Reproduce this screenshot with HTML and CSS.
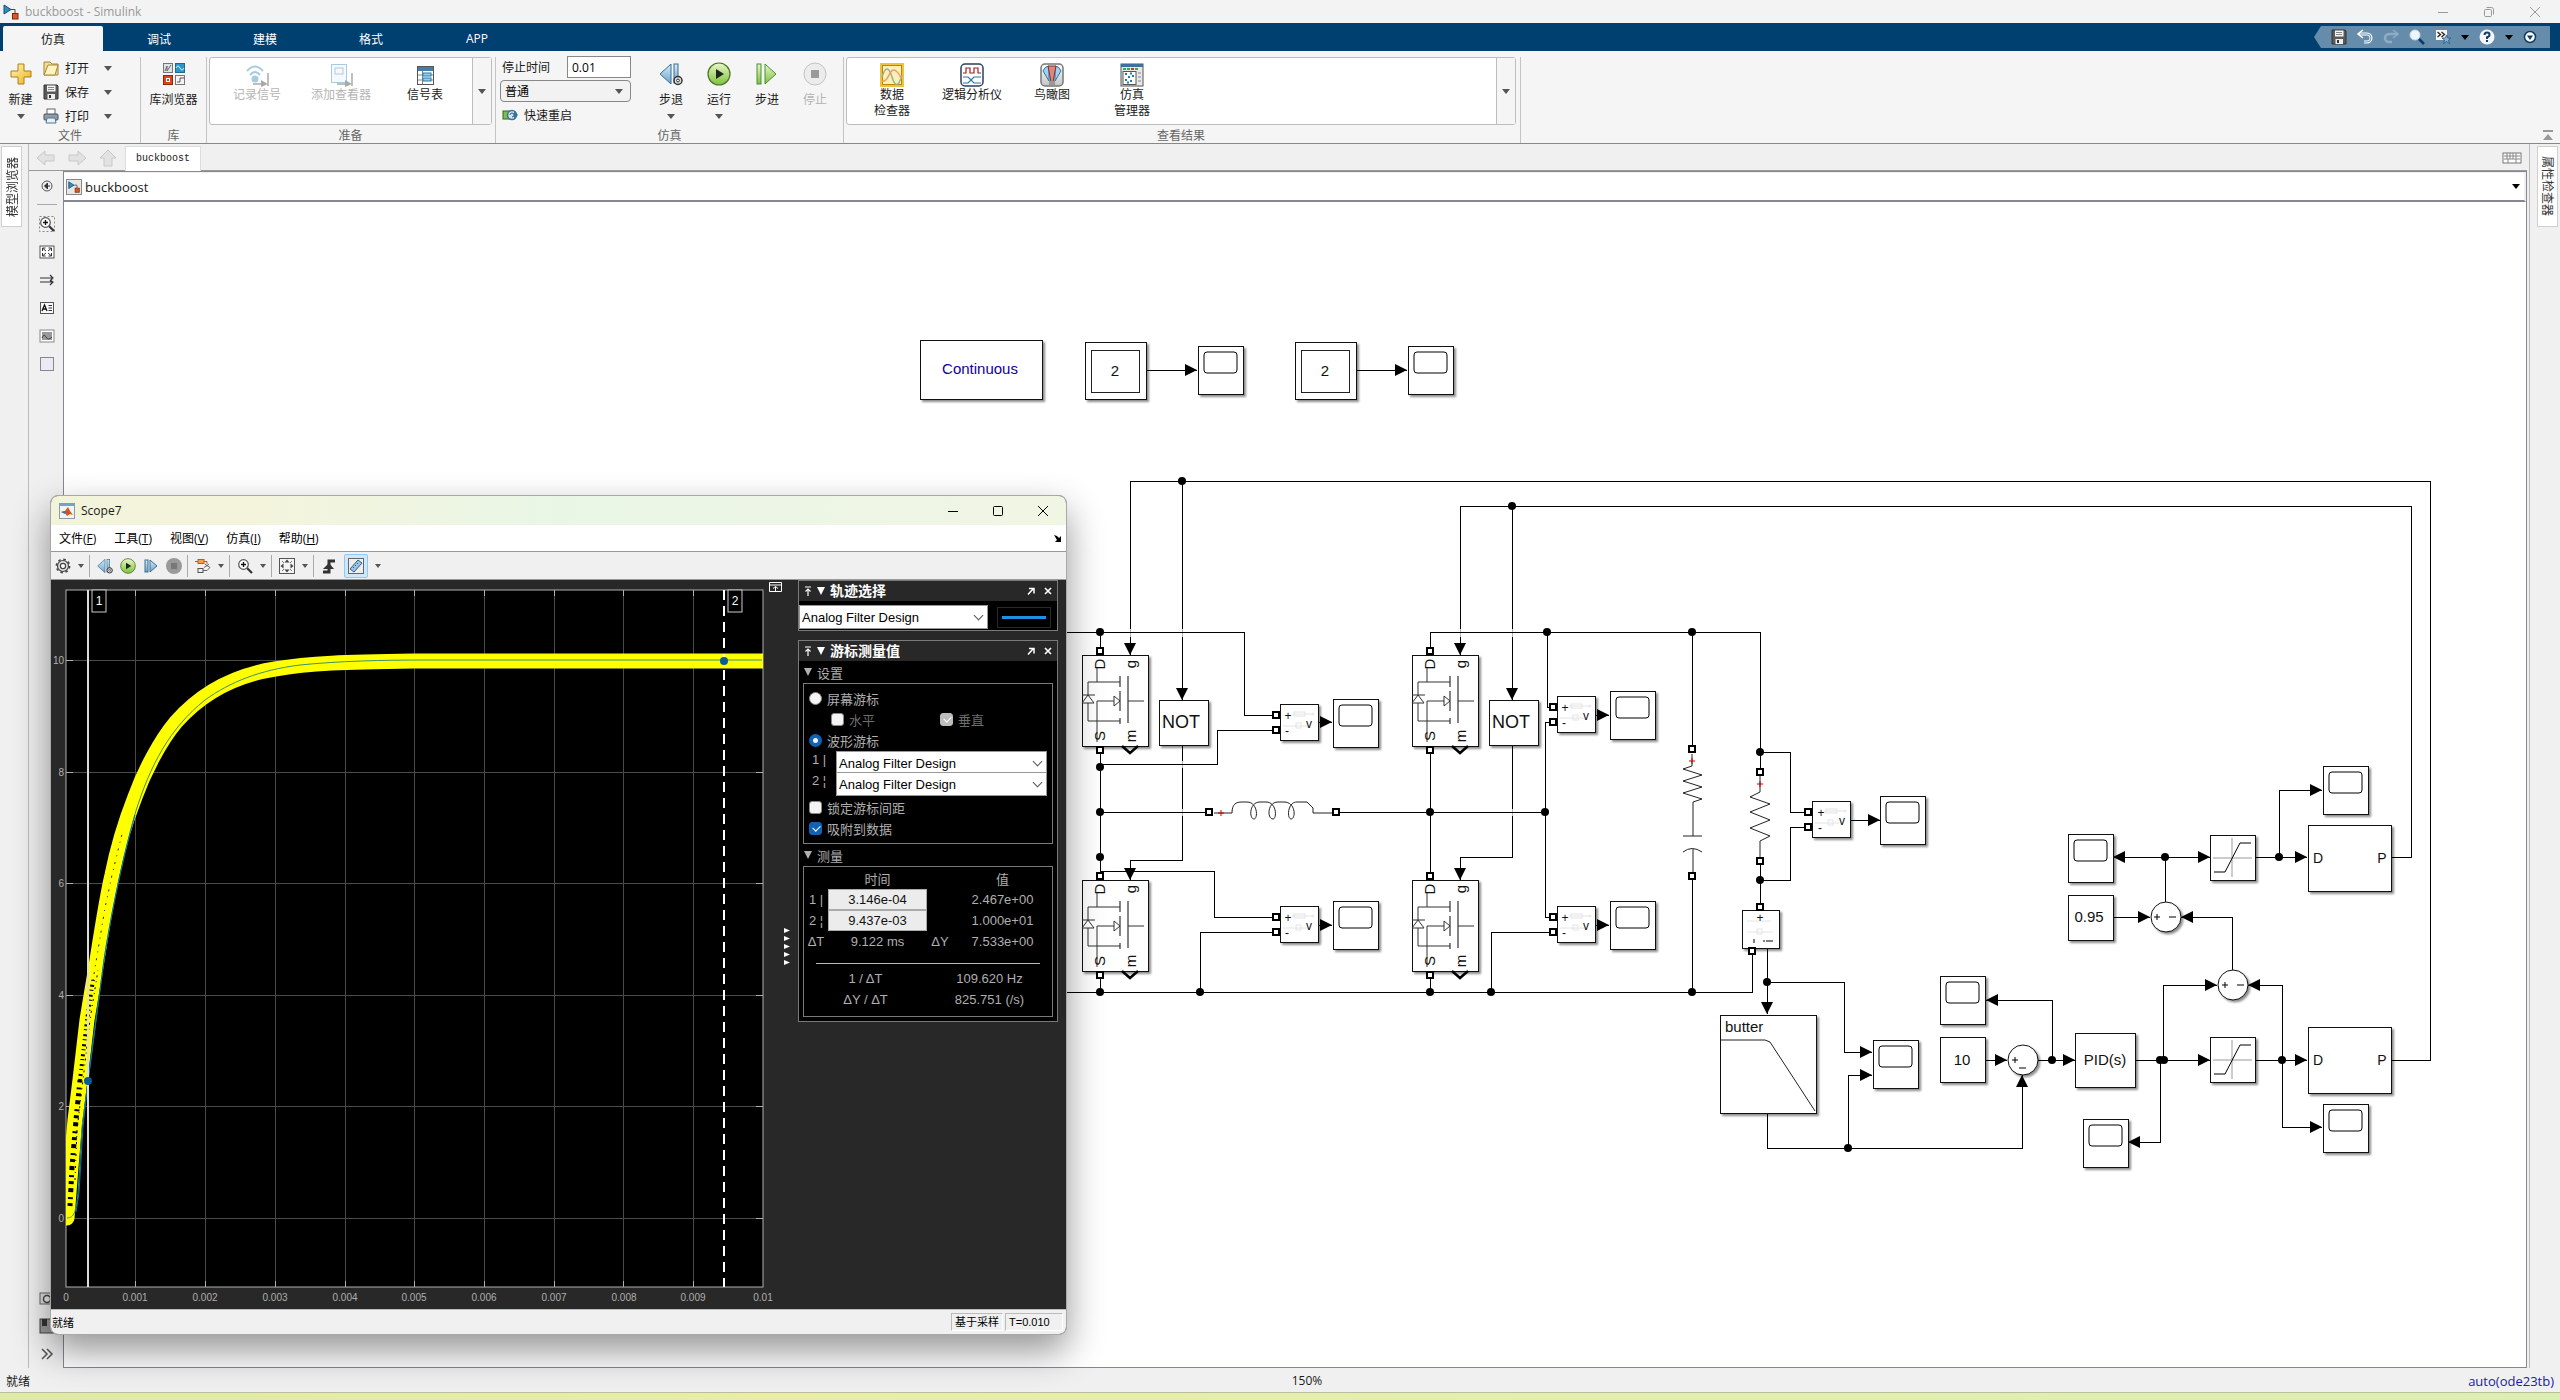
FILE: index.html
```html
<!DOCTYPE html>
<html lang="zh-CN">
  <head>
    <meta charset="utf-8">
    <title>buckboost - Simulink</title>
    <meta name="viewport" content="width=device-width, initial-scale=1.0">
    <link rel="stylesheet" href="styles.css">
  </head>
  <body>
    <!-- shared icons -->
    <svg class="defs" width="0" height="0">
      <defs>
        <linearGradient id="gGold" x1="0" y1="0" x2="1" y2="1"><stop offset="0" stop-color="#fff6c0"/><stop offset="1" stop-color="#eeb010"/></linearGradient>
        <linearGradient id="gGreen" x1="0" y1="0" x2="0" y2="1"><stop offset="0" stop-color="#e9f7c8"/><stop offset="1" stop-color="#7cc23a"/></linearGradient>
        <linearGradient id="gBlue" x1="0" y1="0" x2="0" y2="1"><stop offset="0" stop-color="#d3ebf8"/><stop offset="1" stop-color="#6aa5cc"/></linearGradient>
        <linearGradient id="gGray" x1="0" y1="0" x2="0" y2="1"><stop offset="0" stop-color="#ffffff"/><stop offset="1" stop-color="#c4c4c4"/></linearGradient>
        <symbol id="i-model" viewBox="0 0 16 16">
          <path d="M1 1v9l7-4.500z" fill="#2a8fc4" stroke="#1b4d6b"/>
          <path d="M8 5.500h4v4" fill="none" stroke="#444"/>
          <rect x="9.500" y="9.500" width="5.500" height="5.500" fill="#e0571f" stroke="#7a2a0a"/>
        </symbol>
        <symbol id="i-save" viewBox="0 0 16 16">
          <path d="M1 1h13l1 1v13H1z" fill="#5a5a5a" stroke="#333"/>
          <rect x="4" y="1.500" width="8.500" height="6" fill="#f4f4f4"/>
          <path d="M5 3.500h6M5 5.500h6" stroke="#888"/>
          <rect x="4.500" y="10" width="7.500" height="5" fill="#eee"/>
          <rect x="6" y="11" width="2" height="3" fill="#333"/>
        </symbol>
        <symbol id="i-gear" viewBox="0 0 16 16">
          <circle cx="8" cy="8" r="5.500" fill="#ddd" stroke="#444" stroke-width="1.200"/>
          <circle cx="8" cy="8" r="6.600" fill="none" stroke="#444" stroke-width="1.600" stroke-dasharray="2.500 2.700"/>
          <circle cx="8" cy="8" r="2.600" fill="#fff" stroke="#444" stroke-width="1.200"/>
        </symbol>
        <symbol id="i-run" viewBox="0 0 24 24">
          <circle cx="12" cy="12" r="11" fill="url(#gGreen)" stroke="#4d7326" stroke-width="1.200"/>
          <path d="M9 7l8 5-8 5z" fill="#222"/>
        </symbol>
        <symbol id="i-stepback" viewBox="0 0 24 24">
          <path d="M12 2v20L1 12z" fill="url(#gBlue)" stroke="#3a6d93"/>
          <rect x="15" y="2" width="4" height="19" fill="url(#gBlue)" stroke="#3a6d93"/>
          <circle cx="19" cy="18.500" r="4" fill="#ddd" stroke="#333" stroke-width="1.500"/>
          <circle cx="19" cy="18.500" r="1.400" fill="#fff" stroke="#333"/>
        </symbol>
        <symbol id="i-stepfwd" viewBox="0 0 24 24">
          <rect x="2" y="2" width="4" height="20" fill="url(#gGreen)" stroke="#4b8f3a"/>
          <path d="M10 2v20l11-10z" fill="url(#gGreen)" stroke="#4b8f3a"/>
        </symbol>
        <symbol id="i-stop" viewBox="0 0 24 24">
          <circle cx="12" cy="12" r="11" fill="#ececec" stroke="#c2c2c2"/>
          <rect x="8" y="8" width="8" height="8" fill="#9a9a9a"/>
        </symbol>
        <symbol id="i-lens" viewBox="0 0 16 16">
          <circle cx="6.500" cy="6.500" r="4.800" fill="#fff" stroke="#555" stroke-width="1.200"/>
          <path d="M4 6.500h5M6.500 4v5" stroke="#111" stroke-width="1.300"/>
          <path d="M10.200 10.200L15 15" stroke="#333" stroke-width="2.200"/>
        </symbol>
        <symbol id="i-pin" viewBox="0 0 8 10"><path d="M1 1h6M4 10V3M1.500 5.500L4 3l2.500 2.500" fill="none" stroke="#fff" stroke-width="1.200"/></symbol>
        <symbol id="i-undock" viewBox="0 0 8 8"><path d="M1 7.500L6 2M2 1.500h5v5" fill="none" stroke="#fff" stroke-width="1.500"/></symbol>
        <symbol id="i-x" viewBox="0 0 8 8"><path d="M1 1l6 6M7 1L1 7" stroke="#fff" stroke-width="1.600"/></symbol>
      </defs>
    </svg>

    <header class="titlebar">
      <svg width="16" height="16"><use href="#i-model"/></svg>
      <span class="title-text">buckboost - Simulink</span>
      <div class="win-buttons">
        <button aria-label="最小化"><svg width="12" height="12"><path d="M1 6.500h10" stroke="#999"/></svg></button>
        <button aria-label="还原"><svg width="12" height="12" fill="none" stroke="#999"><rect x="1.500" y="3.500" width="7" height="7" rx="1"/><path d="M3.500 1.500h5q2 0 2 2v5"/></svg></button>
        <button aria-label="关闭"><svg width="12" height="12"><path d="M1 1l10 10M11 1L1 11" stroke="#999"/></svg></button>
      </div>
    </header>

    <nav class="tabs">
      <button class="tab active">仿真</button>
      <button class="tab">调试</button>
      <button class="tab">建模</button>
      <button class="tab">格式</button>
      <button class="tab">APP</button>
      <div class="quick">
        <button aria-label="保存"><svg width="16" height="16"><use href="#i-save"/></svg></button>
        <button aria-label="撤销"><svg width="16" height="16" fill="none"><path d="M2 5h8a4 4 0 0 1 0 8H7" stroke="#fff" stroke-width="3"/><path d="M6 1L1 5l5 4" stroke="#fff" stroke-width="1.500"/><path d="M3 5h7a4 4 0 0 1 0 8H7" stroke="#5d93bd"/></svg></button>
        <button aria-label="重做"><svg width="16" height="16" fill="none" opacity=".6"><path d="M14 5H6a4 4 0 0 0 0 8h3" stroke="#a9c4d8" stroke-width="2.500"/><path d="M10 1l5 4-5 4" stroke="#a9c4d8" stroke-width="1.500"/></svg></button>
        <button aria-label="搜索"><svg width="16" height="16"><circle cx="6" cy="6" r="5" fill="#eef5fa" stroke="#c9d9e4"/><path d="M10 10l5 5" stroke="#0c3b66" stroke-width="2.500"/></svg></button>
        <button aria-label="收藏"><svg width="16" height="16"><rect x="1" y="1" width="11" height="10" fill="#f6f6f6"/><path d="M2.500 3l3 2.500-3 2.500M6.500 3l3 2.500-3 2.500" fill="none" stroke="#222" stroke-width="1.300"/><path d="M11.500 6l1.300 3H16l-2.500 2 1 3.500-3-2-3 2 1-3.500L7 9h3.200z" fill="#7fb2dd" stroke="#2c4d6b" stroke-width=".7"/></svg></button>
        <i class="caret dark"></i>
        <button aria-label="帮助"><svg width="16" height="16"><circle cx="8" cy="8" r="7.500" fill="#f4f7fa"/><path d="M5.500 6q0-2.500 2.500-2.500t2.500 2.200Q10.500 7.500 8 8.300V10" fill="none" stroke="#173f63" stroke-width="2"/><rect x="7" y="11" width="2" height="2" fill="#173f63"/></svg></button>
        <i class="caret dark"></i>
        <button aria-label="更多"><svg width="14" height="14"><circle cx="7" cy="7" r="5.500" fill="#fff" stroke="#0c3b66" stroke-width="1.500"/><path d="M4 5.500h6L7 10z" fill="#0c3b66"/></svg></button>
      </div>
    </nav>

    <section class="toolstrip">
      <div class="group g-file">
        <div class="group-body">
          <button class="big">
            <svg width="24" height="24"><path d="M9 2h6v7h7v6h-7v7H9v-7H2V9h7z" fill="url(#gGold)" stroke="#a8801c"/></svg>
            <span>新建</span><i class="caret"></i>
          </button>
          <div class="rows">
            <button class="row"><svg width="16" height="16"><path d="M1 2h6l2 2h6v11H1z" fill="#f3dd90" stroke="#a5873a"/><path d="M5 5h10l-3 10H1z" fill="#fff3c4" stroke="#a5873a"/></svg><span>打开</span><i class="caret"></i></button>
            <button class="row"><svg width="16" height="16"><use href="#i-save"/></svg><span>保存</span><i class="caret"></i></button>
            <button class="row"><svg width="16" height="16"><rect x="4" y="1" width="8" height="6" fill="#fff" stroke="#666"/><rect x="1" y="6" width="14" height="6" rx="1" fill="#8e9dab" stroke="#46525c"/><path d="M4 10h8l1 5H3z" fill="#e7f1f8" stroke="#56748c"/></svg><span>打印</span><i class="caret"></i></button>
          </div>
        </div>
        <div class="group-label">文件</div>
      </div>

      <div class="group g-lib">
        <div class="group-body">
          <button class="big">
            <svg width="24" height="24">
              <rect x="1.500" y="1.500" width="9" height="9" fill="#dfe3e6" stroke="#777"/><path d="M3 9l2-5v5l4-6" fill="none" stroke="#666"/>
              <rect x="13.500" y="1.500" width="9" height="9" fill="#2b96c9" stroke="#1c6a92"/><path d="M14 6q2-4 4 0t4 0" fill="none" stroke="#d5f0fc"/>
              <rect x="1.500" y="13.500" width="9" height="9" fill="#d9481c" stroke="#8b2a0c"/><rect x="4.500" y="16.500" width="3" height="3" fill="none" stroke="#fff"/>
              <rect x="13.500" y="13.500" width="9" height="9" fill="#f4f4f4" stroke="#777"/><path d="M15 20h3v-4h4" fill="none" stroke="#555"/>
            </svg>
            <span>库浏览器</span>
          </button>
        </div>
        <div class="group-label">库</div>
      </div>

      <div class="group g-prep">
        <div class="group-body">
          <div class="gallery">
            <button class="item" disabled><svg width="24" height="24" fill="none"><path d="M2 8q8-9 16 0M5 12q5-6 10 0" stroke="#a9cbe2" stroke-width="2"/><circle cx="10" cy="16" r="3.500" fill="#a9cbe2"/><path d="M8 21h10M23 10v13" stroke="#aaa" stroke-width="1.500"/><path d="M16 17l7 4-7 3z" fill="#aaa"/></svg><span>记录信号</span></button>
            <button class="item" disabled><svg width="24" height="24" fill="none"><rect x="2.500" y="1.500" width="15" height="18" fill="#f6f9fb" stroke="#a9cbe2"/><rect x="6" y="5" width="8" height="6" stroke="#a9cbe2"/><path d="M8 21h10M23 10v13" stroke="#aaa" stroke-width="1.500"/><path d="M16 17l7 4-7 3z" fill="#aaa"/></svg><span>添加查看器</span></button>
            <button class="item"><svg width="24" height="24"><rect x="4.500" y="3.500" width="16" height="18" fill="#fff" stroke="#555"/><rect x="5" y="4" width="15" height="4" fill="#4a7ba6"/><path d="M5 12h15M5 17h15M9.500 8v13" stroke="#888"/><rect x="10" y="10" width="8" height="3" fill="#8ed0f0" stroke="#2c7aa8"/><rect x="10" y="15" width="8" height="3" fill="#8ed0f0" stroke="#2c7aa8"/></svg><span>信号表</span></button>
            <button class="more" aria-label="更多"><i class="caret"></i></button>
          </div>
        </div>
        <div class="group-label">准备</div>
      </div>

      <div class="group g-sim">
        <div class="group-body">
          <div class="sim-form">
            <div class="stop"><label for="stoptime">停止时间</label><input id="stoptime" type="text" value="0.01"></div>
            <div class="mode"><select aria-label="仿真模式"><option>普通</option></select></div>
            <button class="restart"><svg width="16" height="16"><rect x="1" y="4" width="7" height="8" fill="#7fc04c" stroke="#35641a"/><circle cx="10" cy="8" r="4.500" fill="#cfe6f4" stroke="#35749c" stroke-width="1.500"/><path d="M8 8a2 2 0 1 1 2 2" fill="none" stroke="#235a7d"/><path d="M12 4l4 4-4 4z" fill="#35749c"/></svg><span>快速重启</span></button>
          </div>
          <button class="big"><svg width="24" height="24"><use href="#i-stepback"/></svg><span>步退</span><i class="caret"></i></button>
          <button class="big"><svg width="24" height="24"><use href="#i-run"/></svg><span>运行</span><i class="caret"></i></button>
          <button class="big"><svg width="24" height="24"><use href="#i-stepfwd"/></svg><span>步进</span></button>
          <button class="big" disabled><svg width="24" height="24"><use href="#i-stop"/></svg><span>停止</span></button>
        </div>
        <div class="group-label">仿真</div>
      </div>

      <div class="group g-result">
        <div class="group-body">
          <div class="gallery">
            <button class="item"><svg width="24" height="24" fill="none"><rect x="1" y="1" width="22" height="22" fill="#ffeeb5" stroke="#f0c33c" stroke-width="2"/><rect x="2.500" y="2.500" width="19" height="19" stroke="#b8860b"/><path d="M2 14q5-16 10 0t10-2" stroke="#8fb39a" stroke-width="1.500"/><path d="M2 18q4 1 7-6t7-4 5 8" stroke="#e0a070" stroke-width="1.500"/></svg><span>数据<br>检查器</span></button>
            <button class="item"><svg width="24" height="24" fill="none"><rect x="1" y="1" width="22" height="22" rx="4" fill="#fff" stroke="#2c3e60" stroke-width="1.500"/><path d="M3 10h3V5h4v5h4V5h4v5h3" stroke="#a02020" stroke-width="1.200"/><path d="M3 14h5l6 6h7M3 20h5l6-6h7" stroke="#2878a8" stroke-width="1.200"/></svg><span>逻辑分析仪</span></button>
            <button class="item"><svg width="24" height="24"><rect x="1" y="1" width="22" height="22" rx="4" fill="url(#gGray)" stroke="#777" stroke-width="1.500"/><path d="M9 18L3 8q2-5 6-5zM15 18l6-10q-2-5-6-5z" fill="#9fd0ee" stroke="#2878a8"/><path d="M8 3h8l-3 16h-2z" fill="#d98a80" stroke="#8a2a20"/><rect x="9" y="18" width="6" height="4" fill="#999"/></svg><span>鸟瞰图</span></button>
            <button class="item"><svg width="24" height="24"><rect x="1" y="1" width="22" height="22" fill="#e8e8e8" stroke="#555"/><rect x="1" y="1" width="22" height="3" fill="#3f6f9f"/><path d="M3 6h3M7 6h3M15 6h3" stroke="#2fae4e" stroke-width="2"/><path d="M11 6h3" stroke="#c33" stroke-width="2"/><rect x="3" y="8.500" width="13" height="13" fill="#fff" stroke="#555"/><path d="M5 11h2M10 10.500h2M8 14h2M12 13h2M5 17h2M10 18h2M7 19.500h2" stroke="#2878a8" stroke-width="2"/><path d="M18 10h3M18 14h3M18 18h3" stroke="#888"/></svg><span>仿真<br>管理器</span></button>
            <button class="more" aria-label="更多"><i class="caret"></i></button>
          </div>
        </div>
        <div class="group-label">查看结果</div>
      </div>
      <button class="collapse" aria-label="折叠"><svg width="12" height="12"><path d="M1 1h10v2H1zM6 5l5 6H1z" fill="#999"/></svg></button>
    </section>

    <main class="work">
      <aside class="dock left"><button class="side-tab">模型浏览器</button></aside>

      <div class="center">
        <div class="doc-tabs">
          <button aria-label="后退"><svg width="20" height="18"><path d="M1 9l8-7v4h9v6H9v4z" fill="#e2e2e2" stroke="#c8c8c8"/></svg></button>
          <button aria-label="前进"><svg width="20" height="18"><path d="M19 9l-8-7v4H2v6h9v4z" fill="#e2e2e2" stroke="#c8c8c8"/></svg></button>
          <button aria-label="向上"><svg width="20" height="18"><path d="M10 1l8 8h-4v8H6V9H2z" fill="#e2e2e2" stroke="#c8c8c8"/></svg></button>
          <button class="doc-tab">buckboost</button>
          <button class="keys" aria-label="键盘"><svg width="20" height="12"><rect x="1" y="1" width="18" height="10" fill="#fff" stroke="#777"/><path d="M2 4h16M2 7h16M5 1v6M8 1v6M11 1v6M14 1v6M6 7v4M14 7v4" stroke="#888"/></svg></button>
        </div>
        <div class="editor-row">
          <div class="palette">
            <button aria-label="隐藏浏览器"><svg width="16" height="16"><circle cx="8" cy="8" r="5" fill="#eee" stroke="#555"/><path d="M11 8H6M8.500 5L5.500 8l3 3z" fill="#333" stroke="#333"/></svg></button>
            <hr>
            <button aria-label="缩放"><svg width="16" height="16"><rect x=".5" y=".5" width="15" height="15" fill="none" stroke="#888" stroke-dasharray="2 2"/><use href="#i-lens"/></svg></button>
            <button aria-label="适应视图"><svg width="16" height="16"><rect x="1" y="2" width="14" height="12" fill="#fff" stroke="#555"/><path d="M3.500 7V4h3M9.500 4h3v3M12.500 9v3h-3M6.500 12h-3V9M4 4.500l3 2.500M12 4.500L9 7M4 11.500L7 9M12 11.500L9 9" fill="none" stroke="#333"/></svg></button>
            <button aria-label="采样时间"><svg width="16" height="16"><path d="M1 6h12M1 10h12M11 3l3 3-3 3M11 8l3 2-3 3" fill="none" stroke="#333" stroke-width="1.200"/></svg></button>
            <button aria-label="注释"><svg width="16" height="16"><rect x="1.500" y="2.500" width="13" height="11" fill="#f8f8f8" stroke="#555"/><path d="M3 11l2.500-6L8 11M4 9h3" fill="none" stroke="#111" stroke-width="1.300"/><path d="M9.500 5.500H13M9.500 8H13M9.500 10.500H13" stroke="#333"/></svg></button>
            <button aria-label="图像"><svg width="16" height="16"><rect x="1" y="2" width="14" height="12" fill="#fff" stroke="#888"/><rect x="3" y="4" width="10" height="8" fill="#999"/><path d="M3 10q2-5 4-1t6 0" fill="none" stroke="#444"/></svg></button>
            <button aria-label="区域"><svg width="16" height="16"><rect x="1.500" y="1.500" width="13" height="13" fill="#e9e9f7" stroke="#888"/></svg></button>
            <button class="push" aria-label="截图"><svg width="16" height="16"><rect x="1" y="3" width="14" height="11" fill="#ddd" stroke="#666"/><circle cx="8" cy="9" r="3.500" fill="#eee" stroke="#444" stroke-width="1.500"/></svg></button>
            <button aria-label="报告"><svg width="16" height="16"><rect x="1" y="1" width="14" height="14" fill="#999" stroke="#444"/><path d="M3 1h5v7H3z" fill="#333"/></svg></button>
            <button aria-label="展开"><svg width="16" height="16"><path d="M3 3l5 5-5 5M8 3l5 5-5 5" fill="none" stroke="#555" stroke-width="1.500"/></svg></button>
          </div>

          <div class="editor">
            <div class="crumb">
              <svg width="16" height="16"><rect x=".5" y=".5" width="15" height="15" fill="#e6e6e6" stroke="#888"/><use href="#i-model" x="2" y="2" width="12" height="12"/></svg>
              <span>buckboost</span>
              <i class="caret dark"></i>
            </div>
            <div class="canvas">
              <svg class="diagram" width="2462" height="1165" viewBox="64 202 2462 1165">
                <defs>
                  <marker id="arrow" markerUnits="userSpaceOnUse" markerWidth="12" markerHeight="12" refX="12" refY="6" orient="auto"><path d="M0 0l12 6-12 6z"/></marker>
                  <g id="port"><rect x="-3" y="-3" width="6" height="6" fill="#fff" stroke="#000" stroke-width="2"/></g>
                  <g id="scope">
                    <rect class="block" width="45" height="48"/>
                    <rect x="6" y="6" width="33" height="21" rx="3" fill="none" stroke="#000"/>
                  </g>
                  <g id="sat">
                    <rect class="block" width="45" height="45"/>
                    <path d="M3 23h39M22 3v39" stroke="#999"/>
                    <path d="M4 37h11L30 8h11" fill="none" stroke="#000"/>
                  </g>
                  <g id="meter">
                    <rect class="block" width="38" height="36"/>
                    <g fill="none" stroke="#e4e4e4"><path d="M12 10h20M3 22h24"/><rect x="14" y="8" width="11" height="4"/><rect x="16" y="19" width="5" height="5"/><circle cx="33" cy="10" r="1"/></g>
                    <use href="#port" x="-4" y="11"/><use href="#port" x="-4" y="26"/>
                  </g>
                  <g id="mosfet">
                    <rect class="block" width="66" height="91"/>
                    <g fill="none" stroke="#333">
                      <path d="M15 12v15M6 27h32M6 27v13M6 66V48M6 66h32M0 40h13M6 40l-6 8h12zM15 87V46h17M32 41l6 5-6 5zM46 46h16"/>
                      <path d="M38 21v11M38 36v20M38 63v6M46 21v47" stroke-width="1.200"/>
                    </g>
                    <path d="M40 91l8 7 8-7" fill="none" stroke="#000" stroke-width="2.500"/>
                    <use href="#port" x="18" y="-4"/><use href="#port" x="18" y="95"/>
                  </g>
                  <g id="plus"><path d="M-3 0h6M0-3v6" stroke="#c00"/></g>
                </defs>

                <!-- vertical signals first, the buses jump over them -->
                <g class="wire">
                  <path d="M1182 481V700" marker-end="url(#arrow)"/>
                  <path d="M2390 1060H2430V481H1130V655" marker-end="url(#arrow)"/>
                  <path d="M2390 857H2411V506H1460V655" marker-end="url(#arrow)"/>
                  <path d="M1512 506V700" marker-end="url(#arrow)"/>
                  <path d="M1182 745V860H1130V880" marker-end="url(#arrow)"/>
                  <path d="M1512 745V857H1460V880" marker-end="url(#arrow)"/>
                </g>
                <g fill="#fff" fill-opacity=".7">
                  <rect x="1127" y="629" width="6" height="8"/><rect x="1179" y="629" width="6" height="8"/>
                  <rect x="1457" y="629" width="6" height="8"/><rect x="1509" y="629" width="6" height="8"/>
                  <rect x="1179" y="761" width="6" height="7"/><rect x="1179" y="809" width="6" height="7"/><rect x="1509" y="809" width="6" height="7"/>
                </g>
                <g class="wire">
                  <path d="M1060 632H1244V715H1276"/>
                  <path d="M1100 632V651M1100 749V876M1100 974V992"/>
                  <path d="M1100 764H1217V730H1276"/>
                  <path d="M1100 812H1209M1336 812H1545"/>
                  <path d="M1100 871H1214V917H1276"/>
                  <path d="M1060 992H1752V951"/>
                  <path d="M1200 992V932H1276"/>
                  <path d="M1430 651V632H1760V772M1760 861V907M1430 749V876M1430 974V992"/>
                  <path d="M1547 632V707H1554"/>
                  <path d="M1554 722H1545V917H1554M1554 932H1491V992"/>
                  <path d="M1692 632V749M1692 876V992"/>
                  <path d="M1760 752H1790V812H1809M1760 880H1790V827H1809"/>
                  <path d="M1318 722H1332" marker-end="url(#arrow)"/>
                  <path d="M1318 925H1332" marker-end="url(#arrow)"/>
                  <path d="M1596 715H1609" marker-end="url(#arrow)"/>
                  <path d="M1596 925H1609" marker-end="url(#arrow)"/>
                  <path d="M1850 820H1880" marker-end="url(#arrow)"/>
                  <path d="M1767 948V1014" marker-end="url(#arrow)"/>
                  <path d="M1767 982H1844V1052H1872" marker-end="url(#arrow)"/>
                  <path d="M1848 1148V1075H1872" marker-end="url(#arrow)"/>
                  <path d="M1767 1113V1148H2022V1075" marker-end="url(#arrow)"/>
                  <path d="M1985 1060H2007" marker-end="url(#arrow)"/>
                  <path d="M2038 1060H2075" marker-end="url(#arrow)"/>
                  <path d="M2052 1060V1000H1986" marker-end="url(#arrow)"/>
                  <path d="M2135 1060H2210" marker-end="url(#arrow)"/>
                  <path d="M2163 1060V985H2217" marker-end="url(#arrow)"/>
                  <path d="M2160 1060V1142H2128" marker-end="url(#arrow)"/>
                  <path d="M2255 1060H2307" marker-end="url(#arrow)"/>
                  <path d="M2282 1060V985H2248" marker-end="url(#arrow)"/>
                  <path d="M2282 1060V1127H2322" marker-end="url(#arrow)"/>
                  <path d="M2232 970V917H2181" marker-end="url(#arrow)"/>
                  <path d="M2113 917H2150" marker-end="url(#arrow)"/>
                  <path d="M2165 902V857H2210" marker-end="url(#arrow)"/>
                  <path d="M2165 857H2113" marker-end="url(#arrow)"/>
                  <path d="M2255 857H2307" marker-end="url(#arrow)"/>
                  <path d="M2279 857V790H2322" marker-end="url(#arrow)"/>
                  <path d="M1146 370H1197" marker-end="url(#arrow)"/>
                  <path d="M1356 370H1407" marker-end="url(#arrow)"/>
                </g>

                <g class="dots">
                  <circle cx="1182" cy="481" r="4"/><circle cx="1512" cy="506" r="4"/>
                  <circle cx="1100" cy="632" r="4"/><circle cx="1547" cy="632" r="4"/><circle cx="1692" cy="632" r="4"/>
                  <circle cx="1100" cy="767" r="4"/><circle cx="1100" cy="812" r="4"/><circle cx="1100" cy="857" r="4"/>
                  <circle cx="1430" cy="812" r="4"/><circle cx="1545" cy="812" r="4"/>
                  <circle cx="1100" cy="992" r="4"/><circle cx="1200" cy="992" r="4"/><circle cx="1430" cy="992" r="4"/><circle cx="1491" cy="992" r="4"/><circle cx="1692" cy="992" r="4"/>
                  <circle cx="1760" cy="752" r="4"/><circle cx="1760" cy="880" r="4"/><circle cx="1767" cy="982" r="4"/><circle cx="1848" cy="1148" r="4"/>
                  <circle cx="2052" cy="1060" r="4"/><circle cx="2160" cy="1060" r="4"/><circle cx="2164" cy="1060" r="4"/><circle cx="2282" cy="1060" r="4"/>
                  <circle cx="2165" cy="857" r="4"/><circle cx="2279" cy="857" r="4"/>
                </g>

                <!-- top row -->
                <rect class="block" x="920" y="340" width="122" height="59"/>
                <text class="t15 blue" x="980" y="374">Continuous</text>
                <rect class="block" x="1085" y="342" width="61" height="57"/><rect class="inner" x="1091" y="350" width="48" height="42"/>
                <text class="t15" x="1115" y="376">2</text>
                <use href="#scope" x="1198" y="346"/>
                <rect class="block" x="1295" y="342" width="61" height="57"/><rect class="inner" x="1301" y="350" width="48" height="42"/>
                <text class="t15" x="1325" y="376">2</text>
                <use href="#scope" x="1408" y="346"/>

                <!-- bridge -->
                <use href="#mosfet" x="1082" y="655"/><use href="#mosfet" x="1412" y="655"/>
                <use href="#mosfet" x="1082" y="880"/><use href="#mosfet" x="1412" y="880"/>
                <g class="t15">
                  <text transform="translate(1105 664) rotate(-90)">D</text><text transform="translate(1136 664) rotate(-90)">g</text>
                  <text transform="translate(1105 736) rotate(-90)">S</text><text transform="translate(1136 736) rotate(-90)">m</text>
                  <text transform="translate(1435 664) rotate(-90)">D</text><text transform="translate(1466 664) rotate(-90)">g</text>
                  <text transform="translate(1435 736) rotate(-90)">S</text><text transform="translate(1466 736) rotate(-90)">m</text>
                  <text transform="translate(1105 889) rotate(-90)">D</text><text transform="translate(1136 889) rotate(-90)">g</text>
                  <text transform="translate(1105 961) rotate(-90)">S</text><text transform="translate(1136 961) rotate(-90)">m</text>
                  <text transform="translate(1435 889) rotate(-90)">D</text><text transform="translate(1466 889) rotate(-90)">g</text>
                  <text transform="translate(1435 961) rotate(-90)">S</text><text transform="translate(1466 961) rotate(-90)">m</text>
                </g>
                <rect class="block" x="1159" y="700" width="49" height="45"/><text class="t18" x="1181" y="728">NOT</text>
                <rect class="block" x="1489" y="700" width="49" height="45"/><text class="t18" x="1511" y="728">NOT</text>

                <!-- inductor -->
                <use href="#port" x="1209" y="812"/><use href="#port" x="1336" y="812"/>
                <path class="part" d="M1214 813H1232C1232 804 1236 802 1242 802H1247C1258 802 1258 819 1254 819C1249 819 1249 802 1260 802H1266C1277 802 1277 819 1273 819C1267 819 1267 802 1278 802H1284C1296 802 1296 819 1291 819C1287 819 1287 802 1297 802H1307L1313 808V813H1332"/>
                <use href="#plus" x="1221" y="813"/>
                <!-- capacitor branch -->
                <use href="#port" x="1692" y="749"/><use href="#port" x="1692" y="876"/>
                <path class="part" d="M1692 754V766L1683 769L1702 775L1683 781L1702 787L1683 793L1702 799L1693 802V836M1683 836H1702M1683 852Q1692 845 1702 852M1693 849V872"/>
                <use href="#plus" x="1692" y="761"/>
                <!-- load resistor -->
                <use href="#port" x="1760" y="772"/><use href="#port" x="1760" y="861"/>
                <path class="part" d="M1760 776V792L1750 797L1770 804L1750 812L1770 820L1750 828L1770 836L1760 841V857"/>
                <use href="#plus" x="1760" y="784"/>

                <!-- meters and their scopes -->
                <use href="#meter" x="1280" y="704"/><use href="#meter" x="1280" y="906"/>
                <use href="#meter" x="1557" y="696"/><use href="#meter" x="1557" y="906"/>
                <use href="#meter" x="1812" y="801"/>
                <g class="t12">
                  <text x="1288" y="720">+</text><text x="1287" y="735">-</text><text x="1309" y="728">v</text>
                  <text x="1288" y="922">+</text><text x="1287" y="937">-</text><text x="1309" y="930">v</text>
                  <text x="1565" y="712">+</text><text x="1564" y="727">-</text><text x="1586" y="720">v</text>
                  <text x="1565" y="922">+</text><text x="1564" y="937">-</text><text x="1586" y="930">v</text>
                  <text x="1821" y="817">+</text><text x="1820" y="832">-</text><text x="1842" y="825">v</text>
                </g>
                <use href="#scope" x="1333" y="699"/><use href="#scope" x="1333" y="901"/>
                <use href="#scope" x="1610" y="691"/><use href="#scope" x="1610" y="901"/>
                <use href="#scope" x="1880" y="796"/>

                <!-- current sensor -->
                <rect class="block" x="1742" y="910" width="37" height="38"/>
                <g fill="none" stroke="#e4e4e4"><path d="M1747 921h24M1747 932h26"/><rect x="1757" y="929" width="5" height="5"/></g>
                <text class="t12" x="1760" y="922">+</text>
                <path d="M1754 939v4M1763 941h2M1766 941h7" stroke="#000"/>
                <use href="#port" x="1760" y="907"/><use href="#port" x="1752" y="951"/>

                <!-- filter -->
                <rect class="block" x="1720" y="1015" width="96" height="98"/>
                <path class="part" d="M1721 1040H1765L1770 1042L1815 1111"/>
                <text class="t15 start" x="1725" y="1032">butter</text>
                <use href="#scope" x="1873" y="1040"/>

                <!-- controller -->
                <use href="#scope" x="1940" y="976"/>
                <rect class="block" x="1940" y="1037" width="45" height="45"/><text class="t15" x="1962" y="1065">10</text>
                <circle class="block" cx="2023" cy="1060" r="15"/>
                <path class="sign" d="M2012 1060h6M2015 1057v6M2019 1068h7"/>
                <rect class="block" x="2075" y="1033" width="60" height="54"/><text class="t15" x="2105" y="1065">PID(s)</text>
                <use href="#scope" x="2083" y="1119"/>
                <use href="#sat" x="2210" y="1037"/>
                <use href="#sat" x="2210" y="835"/>
                <circle class="block" cx="2233" cy="985" r="15"/>
                <path class="sign" d="M2222 985h6M2225 982v6M2237 985h7"/>
                <circle class="block" cx="2166" cy="917" r="15"/>
                <path class="sign" d="M2154 917h6M2157 914v6M2169 917h7"/>
                <use href="#scope" x="2068" y="834"/>
                <rect class="block" x="2068" y="895" width="45" height="45"/><text class="t15" x="2089" y="922">0.95</text>
                <rect class="block" x="2308" y="825" width="83" height="66"/>
                <rect class="block" x="2308" y="1027" width="83" height="66"/>
                <text class="t14" x="2318" y="863">D</text><text class="t14" x="2382" y="863">P</text>
                <text class="t14" x="2318" y="1065">D</text><text class="t14" x="2382" y="1065">P</text>
                <use href="#scope" x="2323" y="766"/><use href="#scope" x="2323" y="1104"/>
              </svg>
            </div>
          </div>
        </div>
      </div>

      <aside class="dock right"><button class="side-tab">属性检查器</button></aside>
    </main>

    <footer class="status">
      <span>就绪</span><span class="zoom">150%</span><a class="solver" href="#">auto(ode23tb)</a>
    </footer>
    <div class="desktop"></div>

    <!-- floating scope window -->
    <section class="scope-window">
      <header class="sw-title">
        <svg width="16" height="16"><rect x=".5" y=".5" width="15" height="15" fill="#f4f4f4" stroke="#8a9aa8"/><rect x="1" y="1" width="14" height="2" fill="#7aa2c4"/><path d="M2 9l4-1 3-4 2 4 3 4-3-1-3 2-2-3z" fill="#d95319"/><path d="M2 9l4-1 1 2-1 1z" fill="#2f78b5"/></svg>
        <span>Scope7</span>
        <div class="sw-buttons">
          <button aria-label="最小化"><svg width="12" height="12"><path d="M1 6.500h10" stroke="#000"/></svg></button>
          <button aria-label="最大化"><svg width="12" height="12"><rect x="1.500" y="1.500" width="9" height="9" rx="1" fill="none" stroke="#000"/></svg></button>
          <button aria-label="关闭"><svg width="12" height="12"><path d="M1 1l10 10M11 1L1 11" stroke="#000"/></svg></button>
        </div>
      </header>
      <nav class="sw-menu">
        <button>文件(<u>F</u>)</button><button>工具(<u>T</u>)</button><button>视图(<u>V</u>)</button><button>仿真(<u>I</u>)</button><button>帮助(<u>H</u>)</button>
        <svg class="dock-arrow" width="8" height="8"><path d="M0 1l3 1 2 2 2-2v6H1l2-2z"/></svg>
      </nav>
      <div class="sw-toolbar">
        <button aria-label="配置属性"><svg width="16" height="16"><use href="#i-gear"/></svg></button><i class="caret"></i>
        <hr>
        <button aria-label="步退"><svg width="16" height="16"><use href="#i-stepback"/></svg></button>
        <button aria-label="运行"><svg width="16" height="16"><use href="#i-run"/></svg></button>
        <button aria-label="步进"><svg width="16" height="16"><rect x="2" y="2" width="3" height="12" fill="url(#gBlue)" stroke="#3a6d93"/><path d="M7 2v12l7-6z" fill="url(#gBlue)" stroke="#3a6d93"/></svg></button>
        <button aria-label="停止"><svg width="16" height="16"><circle cx="8" cy="8" r="8" fill="#999"/><rect x="5" y="5" width="6" height="6" fill="#777"/></svg></button>
        <hr>
        <button aria-label="信号选择"><svg width="16" height="16" fill="none"><rect x="3" y="1.500" width="6" height="4" fill="#f6a04c" stroke="#c05a10"/><path d="M0 3.500h3M9 3.500h3v3" stroke="#c05a10"/><path d="M10 6l2 2 2-2M8 12.500h4l3-3-3-2-3 2" stroke="#666"/><rect x="3" y="10.500" width="5" height="4" fill="#eee" stroke="#555"/></svg></button><i class="caret"></i>
        <hr>
        <button aria-label="放大"><svg width="16" height="16"><use href="#i-lens"/></svg></button><i class="caret"></i>
        <hr>
        <button aria-label="缩放适应"><svg width="16" height="16"><rect x=".5" y=".5" width="15" height="15" fill="#f4f4f4" stroke="#555"/><path d="M8 1.500l2.500 3h-5zM8 14.500l2.500-3h-5zM1.500 8l3-2.500v5zM14.500 8l-3-2.500v5z" fill="#444"/><path d="M3 3l2 2M13 3l-2 2M3 13l2-2M13 13l-2-2" stroke="#777"/></svg></button><i class="caret"></i>
        <hr>
        <button aria-label="触发"><svg width="16" height="16"><path d="M2 14h6V3h6" fill="none" stroke="#333" stroke-width="3"/><path d="M2 11l6-6 5 6z" fill="#333"/></svg></button>
        <button class="on" aria-label="游标测量"><svg width="16" height="16"><rect x=".5" y=".5" width="15" height="15" fill="#eee" stroke="#666"/><path d="M2 11l8-9 4 3-8 9z" fill="#9cc4e6" stroke="#2c5f8c"/><path d="M5 9l1 1M7 7l1 1M9 5l1 1" stroke="#2c5f8c"/></svg></button><i class="caret"></i>
      </div>

      <div class="sw-body">
        <svg class="plot" width="747" height="729" viewBox="51 580 747 729">
          <defs><clipPath id="axes"><rect x="66" y="590" width="697" height="697"/></clipPath></defs>
          <rect x="66" y="590" width="697" height="697" fill="#000" stroke="#afafaf"/>
          <g class="grid">
            <path d="M135 590V1287M205 590V1287M275 590V1287M345 590V1287M414 590V1287M484 590V1287M554 590V1287M623 590V1287M693 590V1287"/>
            <path d="M66 660H763M66 772H763M66 883H763M66 995H763M66 1106H763M66 1218H763"/>
          </g>
          <g class="tick">
            <path d="M135 590v6M205 590v6M275 590v6M345 590v6M414 590v6M484 590v6M554 590v6M623 590v6M693 590v6"/>
            <path d="M135 1287v-6M205 1287v-6M275 1287v-6M345 1287v-6M414 1287v-6M484 1287v-6M554 1287v-6M623 1287v-6M693 1287v-6"/>
            <path d="M66 660h7M66 772h7M66 883h7M66 995h7M66 1106h7M66 1218h7M763 772h-7M763 883h-7M763 995h-7M763 1106h-7M763 1218h-7"/>
          </g>
          <g clip-path="url(#axes)" fill="none">
            <path d="M67 1218L71 1167L75 1120L80 1080L87 1020L97 960C102 928 107 896 112 875C118 845 126 820 135 797C144 772 160 741 176 722C198 697 230 676 275 669C310 663 345 662 414 661H763" stroke="#ff0" stroke-width="15" stroke-linecap="round"/>
            <path d="M70 1206L72 1167L76 1120L80 1080" stroke="#000" stroke-width="5" stroke-dasharray="3 4 2 5 4 4"/>
            <path d="M80 1080L87 1020L93 980" stroke="#000" stroke-width="4" stroke-dasharray="1 3 2 4"/>
            <path d="M75 1180L77 1130L83 1080L90 1020L98 970" stroke="#000" stroke-dasharray="2 5 1 4"/>
            <path d="M93 980L105 908L112 875L123 830" stroke="#222" stroke-dasharray="1 5 2 6"/>
            <path d="M67 1218C74 1218 76 1212 78 1193L82 1127L88 1081L96 1020L104 960C110 920 122 860 135 814C150 765 170 728 205 700C230 682 260 670 300 665C340 661 380 660 430 660H762" stroke="#3f8f70"/>
            <path d="M76 1212L79 1193L83 1127L88 1081L96 1020L104 960C110 920 122 860 135 815" stroke="#0072bd"/>
          </g>
          <path d="M88 590V1287" stroke="#ddd" stroke-width="2"/>
          <path d="M724 590V1287" stroke="#fff" stroke-width="2" stroke-dasharray="10 6"/>
          <circle cx="88" cy="1081" r="4" fill="#0b5a94"/><circle cx="724" cy="661" r="4" fill="#0b5a94"/>
          <rect x="92" y="590" width="14" height="22" fill="#000" stroke="#ccc"/><rect x="728" y="590" width="14" height="22" fill="#000" stroke="#ccc"/>
          <g class="mark"><text x="99" y="605">1</text><text x="735" y="605">2</text></g>
          <g class="ylab"><text x="64" y="664">10</text><text x="64" y="776">8</text><text x="64" y="887">6</text><text x="64" y="999">4</text><text x="64" y="1110">2</text><text x="64" y="1222">0</text></g>
          <g class="xlab"><text x="66" y="1301">0</text><text x="135" y="1301">0.001</text><text x="205" y="1301">0.002</text><text x="275" y="1301">0.003</text><text x="345" y="1301">0.004</text><text x="414" y="1301">0.005</text><text x="484" y="1301">0.006</text><text x="554" y="1301">0.007</text><text x="624" y="1301">0.008</text><text x="693" y="1301">0.009</text><text x="763" y="1301">0.01</text></g>
          <path d="M769.500 582.500h12v9h-12zM769.500 585h12M775.500 591v-4M773 588.500l2.500-2 2.500 2" fill="none" stroke="#fff"/>
          <path d="M784 928l6 2.500-6 2.500zM784 936l6 2.500-6 2.500zM784 944l6 2.500-6 2.500zM784 952l6 2.500-6 2.500zM784 960l6 2.500-6 2.500z" fill="#fff"/>
        </svg>

        <div class="panels">
          <div class="panel">
            <div class="panel-head"><svg width="8" height="10"><use href="#i-pin"/></svg><i class="tri"></i><h2>轨迹选择</h2><button aria-label="取消停靠"><svg width="8" height="8"><use href="#i-undock"/></svg></button><button aria-label="关闭"><svg width="8" height="8"><use href="#i-x"/></svg></button></div>
            <div class="trace">
              <div class="pick"><select aria-label="轨迹"><option>Analog Filter Design</option></select></div>
              <button class="line-style" aria-label="线型"></button>
            </div>
          </div>

          <div class="panel">
            <div class="panel-head"><svg width="8" height="10"><use href="#i-pin"/></svg><i class="tri"></i><h2>游标测量值</h2><button aria-label="取消停靠"><svg width="8" height="8"><use href="#i-undock"/></svg></button><button aria-label="关闭"><svg width="8" height="8"><use href="#i-x"/></svg></button></div>
            <h3><i class="tri"></i>设置</h3>
            <div class="box settings">
              <label class="opt"><input type="radio" name="cursor"><span>屏幕游标</span></label>
              <div class="pair">
                <label class="opt off"><input type="checkbox" disabled><span>水平</span></label>
                <label class="opt off"><input type="checkbox" checked disabled><span>垂直</span></label>
              </div>
              <label class="opt"><input type="radio" name="cursor" checked><span>波形游标</span></label>
              <div class="source"><label for="src1">1 |</label><div class="pick"><select id="src1"><option>Analog Filter Design</option></select></div></div>
              <div class="source"><label for="src2">2 ¦</label><div class="pick"><select id="src2"><option>Analog Filter Design</option></select></div></div>
              <label class="opt last"><input type="checkbox"><span>锁定游标间距</span></label>
              <label class="opt"><input type="checkbox" checked><span>吸附到数据</span></label>
            </div>
            <h3><i class="tri"></i>测量</h3>
            <div class="box">
              <table>
                <tr><th class="c1"></th><th class="c2">时间</th><th class="c3"></th><th>值</th></tr>
                <tr><td><label for="t1">1 |</label></td><td><input id="t1" type="text" value="3.146e-04"></td><td></td><td>2.467e+00</td></tr>
                <tr><td><label for="t2">2 ¦</label></td><td><input id="t2" type="text" value="9.437e-03"></td><td></td><td>1.000e+01</td></tr>
                <tr><td>ΔT</td><td>9.122 ms</td><td>ΔY</td><td>7.533e+00</td></tr>
                <tr class="rule"><td colspan="4"><hr></td></tr>
                <tr><td colspan="2">1 / ΔT</td><td colspan="2">109.620 Hz</td></tr>
                <tr><td colspan="2">ΔY / ΔT</td><td colspan="2">825.751 (/s)</td></tr>
              </table>
            </div>
          </div>
        </div>
      </div>

      <footer class="sw-status"><span class="ready">就绪</span><span class="cell">基于采样</span><span class="cell wide">T=0.010</span></footer>
    </section>
  </body>
</html>
```
FILE: styles.css
```css
*{
  box-sizing: border-box;
}
body{
  margin: 0;
  height: 100vh;
  display: flex;
  flex-direction: column;
  overflow: hidden;
  background-color: #f0f0f0;
  font-family: "Open Sans", "Noto Sans CJK SC", sans-serif;
  font-size: 12px;
  color: #1a1a1a;
}
button{
  font: inherit;
  color: inherit;
  padding: 0;
  border: none;
  background: none;
  cursor: pointer;
}
svg{
  display: block;
  flex: none;
}
.defs{
  position: absolute;
}
.caret{
  flex: none;
  width: 0;
  height: 0;
  border: 4px solid transparent;
  border-top: 5px solid #555;
  border-bottom: none;
}
.caret.dark{
  border-top-color: #000;
}

/* title bar */
.titlebar{
  flex: none;
  height: 23px;
  display: flex;
  align-items: center;
  padding: 0 14px 0 3px;
  gap: 6px;
  background-color: #f3f3f3;
  color: #999;
}
.win-buttons{
  margin-left: auto;
  display: flex;
  gap: 34px;
  padding-right: 5px;
}

/* ribbon tabs */
.tabs{
  flex: none;
  height: 28px;
  display: flex;
  padding: 3px 10px 0 0;
  background-color: #004071;
}
.tab{
  width: 106px;
  color: #fff;
}
.tab.active{
  width: 100px;
  margin: 0 3px;
  border-radius: 2px 2px 0 0;
  background-color: #f5f5f5;
  color: #1a1a1a;
}
.quick{
  width: 236px;
  height: 22px;
  margin-left: auto;
  padding: 0 13px 0 17px;
  display: flex;
  align-items: center;
  justify-content: space-between;
  background-color: #668cab;
  clip-path: polygon(7px 0, 100% 0, 100% 100%, 7px 100%, 0 50%);
}

/* toolstrip */
.toolstrip{
  flex: none;
  height: 93px;
  display: flex;
  padding-top: 6px;
  border-bottom: 1px solid #888;
  background-color: #f5f5f5;
}
.group{
  display: flex;
  flex-direction: column;
  border-right: 1px solid #c4c4c4;
}
.g-file{
  width: 141px;
}
.g-lib{
  width: 66px;
}
.g-prep{
  width: 289px;
  padding: 0 3px 0 2px;
}
.g-sim{
  width: 348px;
}
.g-result{
  flex: 0 1 677px;
  padding: 0 4px 0 2px;
}
.group-body{
  flex: 1;
  display: flex;
}
.group-label{
  height: 14px;
  line-height: 14px;
  text-align: center;
  color: #666;
}
.big{
  width: 48px;
  padding-top: 5px;
  display: flex;
  flex-direction: column;
  align-items: center;
  line-height: 16px;
  white-space: nowrap;
}
.big span{
  margin: 6px 0;
}
.g-file .big{
  width: 41px;
}
.g-lib .big{
  width: 100%;
}
button:disabled{
  color: #b4b4b4;
}
.rows{
  margin-top: -1px;
}
.row{
  display: flex;
  align-items: center;
  height: 24px;
  gap: 6px;
  padding-left: 2px;
}
.row .caret{
  margin-left: 9px;
}
.gallery{
  flex: 1;
  height: 68px;
  display: flex;
  padding-left: 5px;
  border: 1px solid #bdbdbd;
  border-radius: 3px;
  background-color: #fff;
}
.item{
  width: 84px;
  padding-top: 5px;
  display: flex;
  flex-direction: column;
  align-items: center;
  line-height: 16px;
}
.g-result .item{
  width: 80px;
}
.more{
  width: 19px;
  margin-left: auto;
  display: flex;
  align-items: center;
  justify-content: center;
  border-left: 1px solid #bdbdbd;
  background-color: #f5f5f5;
}
.sim-form{
  width: 131px;
  margin: -1px 16px 0 4px;
  display: flex;
  flex-direction: column;
  gap: 2px;
}
.stop{
  display: flex;
  align-items: center;
  justify-content: space-between;
  padding-left: 2px;
}
.stop input{
  width: 64px;
  height: 22px;
  padding: 0 4px;
  border: 1px solid #888;
  font: inherit;
}
.mode,
.pick{
  position: relative;
}
.mode select{
  width: 100%;
  height: 22px;
  padding: 0 4px;
  appearance: none;
  border: 1px solid #888;
  border-radius: 4px;
  background-color: #f2f2f2;
  font: inherit;
}
.mode::after{
  content: "";
  position: absolute;
  right: 8px;
  top: 9px;
  border: 4px solid transparent;
  border-top: 5px solid #555;
  border-bottom: none;
}
.restart{
  height: 22px;
  display: flex;
  align-items: center;
  gap: 6px;
  padding-left: 2px;
}
.collapse{
  margin: 0 6px 2px auto;
  align-self: flex-end;
}

/* work area */
.work{
  flex: 1;
  min-height: 0;
  display: flex;
}
.dock{
  flex: none;
  padding-top: 2px;
}
.dock.left{
  width: 29px;
  padding-left: 1px;
  border-right: 1px solid #bbb;
}
.dock.right{
  width: 31px;
  padding-left: 7px;
  border-left: 1px solid #bbb;
}
.side-tab{
  width: 21px;
  height: 81px;
  border: 1px solid #d0d0d0;
  background-color: #fff;
  writing-mode: vertical-rl;
  text-orientation: sideways;
  color: #333;
}
.left .side-tab{
  transform: rotate(180deg);
}
.center{
  flex: 1;
  min-width: 0;
  display: flex;
  flex-direction: column;
  padding-right: 2px;
}
.doc-tabs{
  flex: none;
  height: 27px;
  display: flex;
  align-items: center;
  gap: 11px;
  padding: 2px 5px 0 7px;
  border-bottom: 1px solid #999;
}
.doc-tab{
  width: 76px;
  height: 25px;
  margin-left: -4px;
  border: 1px solid #ddd;
  border-bottom: none;
  background-color: #fff;
  font-family: "Liberation Mono", monospace;
  font-size: 10px;
}
.keys{
  margin-left: auto;
}
.editor-row{
  flex: 1;
  min-height: 0;
  display: flex;
}
.palette{
  flex: none;
  width: 34px;
  display: flex;
  flex-direction: column;
  align-items: center;
  padding: 1px 0 0 2px;
}
.palette button{
  height: 28px;
}
.palette hr{
  width: 20px;
  margin: 4px 0 5px;
  border: none;
  border-top: 1px solid #aaa;
}
.palette .push{
  margin-top: auto;
}
.editor{
  flex: 1;
  min-width: 0;
  display: flex;
  flex-direction: column;
  border: 1px solid #858890;
}
.crumb{
  flex: none;
  height: 30px;
  display: flex;
  align-items: center;
  gap: 3px;
  padding: 0 4px 0 2px;
  border: 1px solid #f0f0f0;
  border-width: 1px 2px 0 0;
  border-bottom: 2px solid #858890;
  background-color: #fff;
}
.crumb span{
  font-size: 13px;
}
.crumb .caret{
  margin-left: auto;
}
.canvas{
  flex: 1;
  min-height: 0;
  overflow: hidden;
  background-color: #fff;
}

/* block diagram */
.diagram,
.plot{
  font-family: "Liberation Sans", Arial, sans-serif;
}
.block{
  fill: #fff;
  stroke: #111;
  filter: drop-shadow(2px 2px 1px rgba(0, 0, 0, 0.45));
}
rect.block{
  shape-rendering: crispEdges;
}
.inner{
  fill: none;
  stroke: #222;
  shape-rendering: crispEdges;
}
.wire path{
  fill: none;
  stroke: #000;
  shape-rendering: crispEdges;
}
.part{
  fill: none;
  stroke: #222;
}
.sign{
  stroke: #000;
  stroke-width: 1px;
}
.diagram text{
  text-anchor: middle;
  fill: #111;
}
.diagram .start{
  text-anchor: start;
}
.diagram .blue{
  fill: #15009a;
}
.t12{
  font-size: 12px;
}
.t14{
  font-size: 14px;
}
.t15{
  font-size: 15px;
}
.t18{
  font-size: 18px;
}

/* status bar */
.status{
  flex: none;
  height: 25px;
  display: grid;
  grid-template-columns: 1fr auto 1fr;
  align-items: center;
  padding: 1px 6px 0;
  border-bottom: 1px solid #b9bf9a;
}
.zoom{
  padding-left: 54px;
}
.solver{
  justify-self: end;
  color: #1c1c9c;
  text-decoration: none;
  font-size: 13px;
}
.desktop{
  flex: none;
  height: 7px;
  background: linear-gradient(90deg, #dfeaa6, #e9eda6 30%, #e4efae 60%, #dcefb2);
}

/* scope window */
.scope-window{
  position: absolute;
  left: 50px;
  top: 495px;
  width: 1017px;
  border: 1px solid #a8a8a8;
  border-radius: 8px;
  overflow: hidden;
  background-color: #282828;
  box-shadow: 0 16px 36px rgba(0, 0, 0, 0.42);
}
.sw-title{
  height: 29px;
  display: flex;
  align-items: center;
  gap: 6px;
  padding: 0 17px 0 8px;
  background: linear-gradient(90deg, #f2f4da, #f4f4dc 20%, #e9f6e6 50%, #f1f5e4);
}
.sw-buttons{
  margin-left: auto;
  display: flex;
  gap: 33px;
}
.sw-menu{
  height: 26px;
  display: flex;
  align-items: center;
  gap: 18px;
  padding: 0 4px 0 8px;
  background-color: #fff;
  color: #000;
}
.dock-arrow{
  margin-left: auto;
}
.sw-toolbar{
  height: 29px;
  display: flex;
  align-items: center;
  gap: 7px;
  padding-left: 4px;
  border-top: 1px solid #999;
  border-bottom: 1px solid #999;
  background-color: #f0f0f0;
}
.sw-toolbar hr{
  width: 1px;
  height: 22px;
  margin: 0 0 0 -2px;
  border: none;
  background-color: #aaa;
}
.sw-toolbar .caret{
  border-width: 4px 3px 0;
}
.sw-toolbar .on{
  padding: 3px;
  border: 1px solid #90c8f6;
  border-radius: 2px;
  background-color: #cce8ff;
}
.sw-body{
  display: flex;
}
.grid path{
  fill: none;
  stroke: #4a4a4a;
  shape-rendering: crispEdges;
}
.tick path{
  fill: none;
  stroke: #afafaf;
  shape-rendering: crispEdges;
}
.xlab,
.ylab,
.mark{
  font-size: 10px;
  fill: #afafaf;
}
.xlab,
.mark{
  text-anchor: middle;
}
.mark{
  font-size: 12px;
  fill: #fff;
}
.ylab{
  text-anchor: end;
}
.panels{
  flex: none;
  width: 260px;
  display: flex;
  flex-direction: column;
  gap: 9px;
  font-family: "Liberation Sans", "Noto Sans CJK SC", Arial, sans-serif;
  font-size: 13px;
  color: #afafaf;
}
.panel{
  border: 1px solid #7a7a7a;
  background-color: #000;
}
.panel-head{
  height: 20px;
  display: flex;
  align-items: center;
  gap: 5px;
  padding: 0 5px;
  background-color: #282828;
  color: #fff;
}
.panel-head h2{
  margin: 0 auto 0 0;
  font-size: 14px;
  line-height: 20px;
}
.panel-head button{
  margin-left: 4px;
}
.tri{
  width: 0;
  height: 0;
  border: 4px solid transparent;
  border-top: 8px solid currentColor;
  border-bottom: none;
}
.trace{
  display: flex;
  align-items: center;
  justify-content: space-between;
  padding: 4px 6px 1px 0;
}
.trace .pick{
  width: 189px;
}
.line-style{
  width: 54px;
  height: 21px;
  padding: 0 4px;
  border: 1px solid #2a2a2a;
}
.line-style::before{
  content: "";
  display: block;
  height: 3px;
  background-color: #1f8fe0;
}
.pick select{
  width: 100%;
  height: 24px;
  padding: 0 2px;
  appearance: none;
  border: 1px solid #999;
  border-radius: 0;
  background-color: #fff;
  font: inherit;
  color: #000;
}
.pick::after{
  content: "";
  position: absolute;
  right: 6px;
  top: 7px;
  width: 6px;
  height: 6px;
  border-right: 1px solid #555;
  border-bottom: 1px solid #555;
  transform: rotate(45deg);
}
.panel h3{
  margin: 0;
  height: 22px;
  display: flex;
  align-items: center;
  gap: 5px;
  padding-left: 5px;
  font-size: 13px;
  font-weight: normal;
}
.box{
  margin: 0 4px;
  border: 1px solid #7a7a7a;
}
.box:last-child{
  margin-bottom: 4px;
  padding-bottom: 6px;
}
.settings{
  padding: 4px 5px;
}
.opt{
  display: flex;
  align-items: center;
  gap: 5px;
  height: 21px;
}
.opt input{
  width: 13px;
  height: 13px;
  margin: 0;
  appearance: none;
  border: 1px solid #888;
  border-radius: 3px;
  background-color: #f4f4f4;
}
.opt input[type=radio]{
  border-radius: 50%;
}
.opt input[type=radio]:checked{
  border: 4px solid #0f62b5;
}
.opt input[type=checkbox]:checked{
  position: relative;
  border-color: #0f62b5;
  background-color: #0f62b5;
}
.opt input[type=checkbox]:checked::after{
  content: "";
  position: absolute;
  left: 3px;
  top: 2px;
  width: 6px;
  height: 4px;
  border-left: 1px solid #fff;
  border-bottom: 1px solid #fff;
  transform: rotate(-45deg);
}
.opt input[type=checkbox]:checked:disabled{
  border-color: #bdbdbd;
  background-color: #bdbdbd;
}
.opt.off{
  color: #6e6e6e;
}
.pair{
  display: grid;
  grid-template-columns: 109px 1fr;
  padding-left: 22px;
}
.source{
  display: flex;
  height: 21px;
  padding-left: 3px;
}
.source label{
  width: 24px;
  line-height: 18px;
}
.source .pick{
  flex: 1;
}
.opt.last{
  margin-top: 4px;
}
.panel table{
  width: 100%;
  table-layout: fixed;
  border-collapse: collapse;
  text-align: center;
}
.panel th{
  height: 22px;
  padding: 0;
  font-weight: normal;
}
.panel td{
  height: 21px;
  padding: 0;
}
.c1{
  width: 24px;
}
.c2{
  width: 99px;
}
.c3{
  width: 26px;
}
.panel td input{
  display: block;
  width: 100%;
  height: 21px;
  padding: 0;
  border: 1px solid #aaa;
  background-color: #ececec;
  font: inherit;
  color: #111;
  text-align: center;
}
.panel .rule td{
  height: 16px;
}
.rule hr{
  margin: 6px 12px 0;
  border: none;
  border-top: 1px solid #bbb;
}
.sw-status{
  height: 25px;
  display: flex;
  align-items: center;
  gap: 2px;
  padding: 0 3px 0 1px;
  border-top: 1px solid #bbb;
  background-color: #f0f0f0;
  font-family: "Liberation Sans", "Noto Sans CJK SC", sans-serif;
  font-size: 11px;
  color: #000;
}
.ready{
  margin-right: auto;
}
.cell{
  width: 52px;
  height: 18px;
  line-height: 16px;
  padding-left: 3px;
  border: 1px solid #bbb;
  border-right-color: #fff;
  border-bottom-color: #fff;
  white-space: nowrap;
}
.cell.wide{
  width: 58px;
}
```
